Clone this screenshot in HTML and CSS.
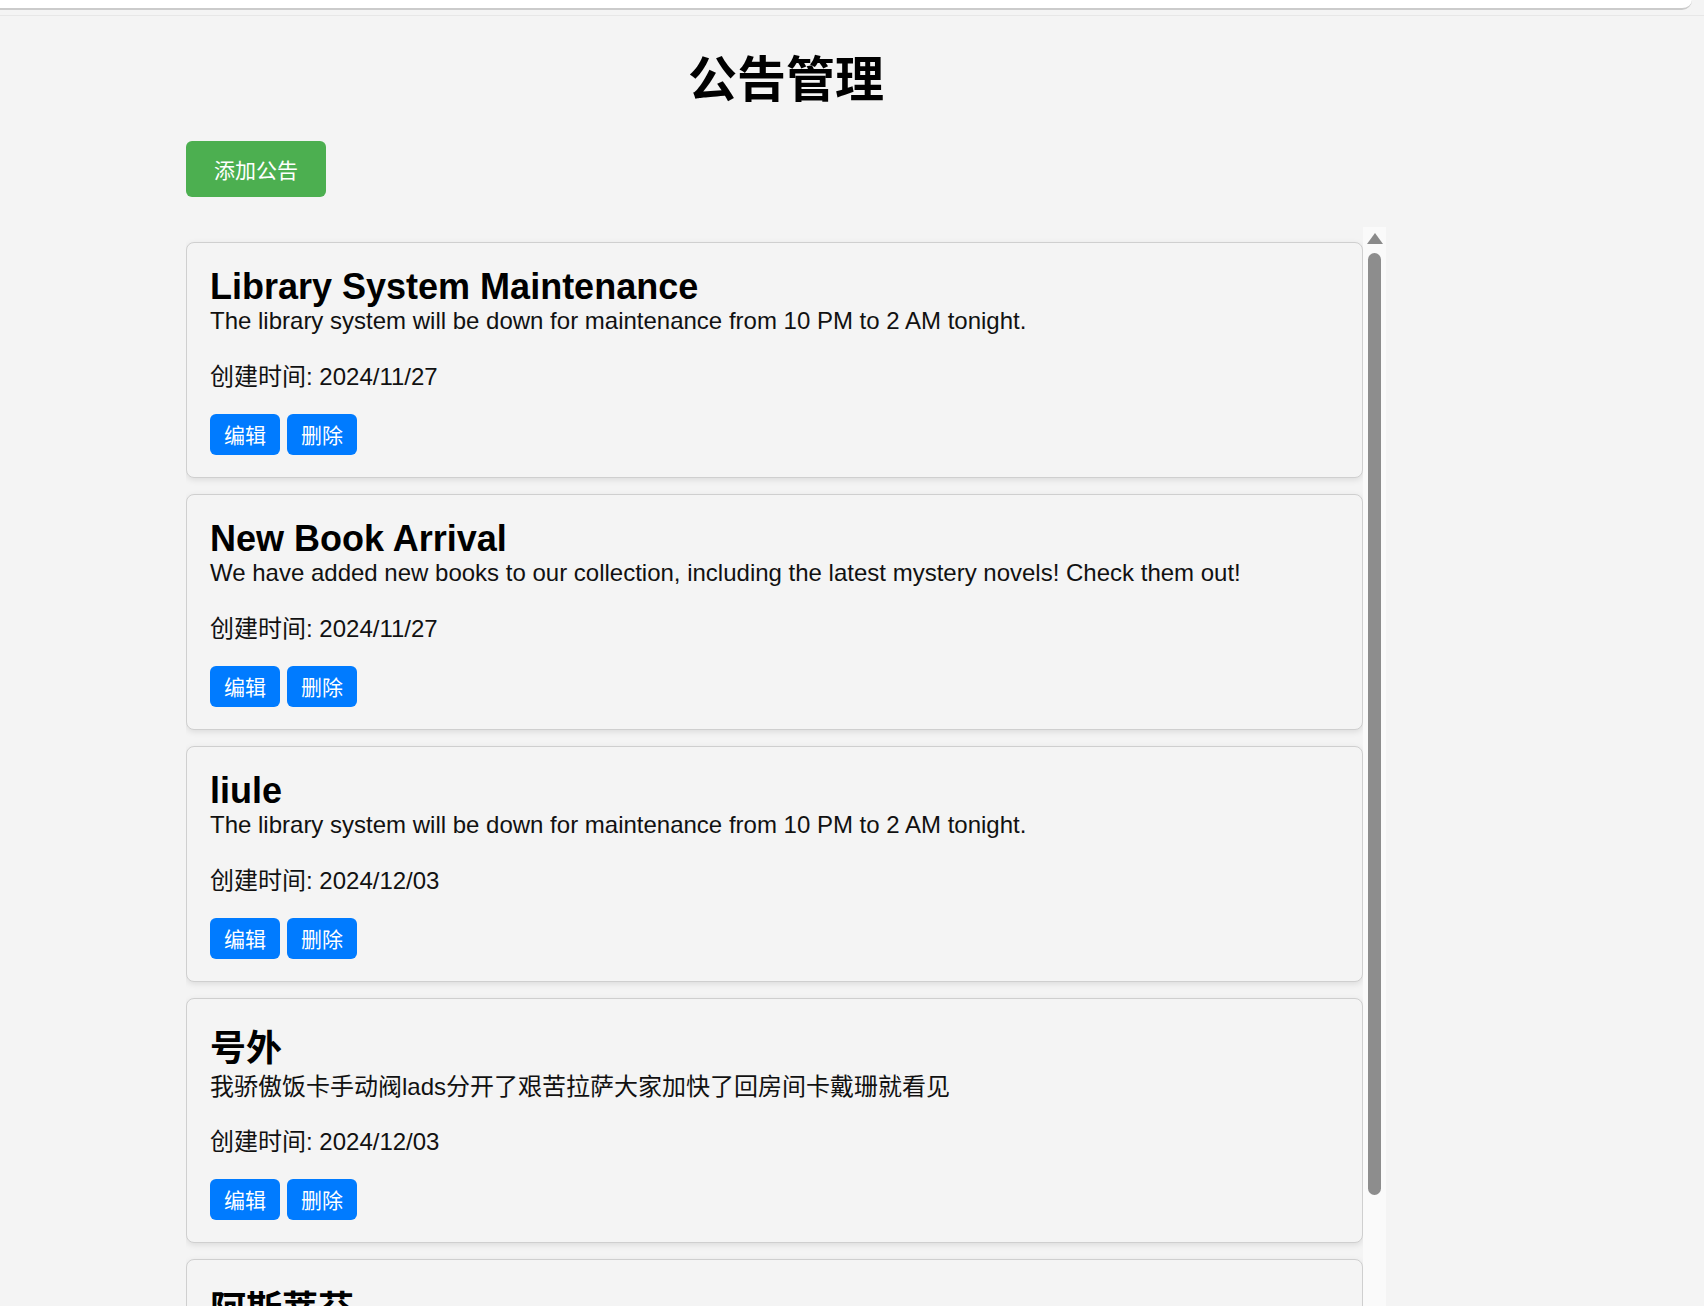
FILE: index.html
```html
<!DOCTYPE html>
<html lang="zh-CN">
<head>
<meta charset="utf-8">
<title>公告管理</title>
<link rel="stylesheet" href="styles.css">
</head>
<body>
<div class="topbar"></div>
<div class="page">
  <div class="container">
    <h1 class="page-title">公告管理</h1>
    <button class="add-btn">添加公告</button>
    <div class="list-wrap">
      <div class="list">
        <div class="card">
          <h2 class="card-title">Library System Maintenance</h2>
          <p class="card-desc">The library system will be down for maintenance from 10 PM to 2 AM tonight.</p>
          <p class="card-date">创建时间: 2024/11/27</p>
          <div class="card-actions">
            <button class="btn">编辑</button><button class="btn">删除</button>
          </div>
        </div>
        <div class="card">
          <h2 class="card-title">New Book Arrival</h2>
          <p class="card-desc">We have added new books to our collection, including the latest mystery novels! Check them out!</p>
          <p class="card-date">创建时间: 2024/11/27</p>
          <div class="card-actions">
            <button class="btn">编辑</button><button class="btn">删除</button>
          </div>
        </div>
        <div class="card">
          <h2 class="card-title">liule</h2>
          <p class="card-desc">The library system will be down for maintenance from 10 PM to 2 AM tonight.</p>
          <p class="card-date">创建时间: 2024/12/03</p>
          <div class="card-actions">
            <button class="btn">编辑</button><button class="btn">删除</button>
          </div>
        </div>
        <div class="card">
          <h2 class="card-title cjk">号外</h2>
          <p class="card-desc cjk">我骄傲饭卡手动阀lads分开了艰苦拉萨大家加快了回房间卡戴珊就看见</p>
          <p class="card-date">创建时间: 2024/12/03</p>
          <div class="card-actions">
            <button class="btn">编辑</button><button class="btn">删除</button>
          </div>
        </div>
        <div class="card">
          <h2 class="card-title cjk">阿斯蒂芬</h2>
          <p class="card-desc cjk">阿斯蒂芬阿斯蒂芬</p>
          <p class="card-date">创建时间: 2024/12/03</p>
          <div class="card-actions">
            <button class="btn">编辑</button><button class="btn">删除</button>
          </div>
        </div>
      </div>
      <div class="scrollbar">
        <div class="scroll-arrow"></div>
        <div class="scroll-thumb"></div>
      </div>
    </div>
  </div>
</div>
</body>
</html>
```
FILE: styles.css
```css
html, body {
  margin: 0;
  padding: 0;
}
body {
  background: #f4f4f4;
  font-family: "Liberation Sans", Arial, "Noto Sans CJK SC", sans-serif;
  color: #000;
  overflow: hidden;
  height: 1306px;
}
.topbar {
  height: 8px;
  background: #fff;
  border-bottom: 2px solid #cbcbcb;
  border-bottom-right-radius: 12px;
  margin-right: 12px;
}
.page {
  margin-top: 5px;
  border-top: 1px solid #e7e7e7;
}
.container {
  width: 1200px;
  margin-left: 186px;
}
.page-title {
  margin: 33px 0 29px;
  font-size: 49px;
  line-height: 63px;
  font-weight: 700;
  text-align: center;
}
.add-btn {
  display: block;
  height: 56px;
  padding: 3px 28px 0;
  border: none;
  border-radius: 6px;
  background: #4caf50;
  color: #fff;
  font-family: "Liberation Sans", Arial, "Noto Sans CJK SC", sans-serif;
  font-size: 21px;
  line-height: 53px;
  cursor: pointer;
}
.list-wrap {
  display: flex;
  margin-top: 30px;
  height: 1120px;
}
.list {
  flex: 1;
  overflow: hidden;
  padding-top: 15px;
}
.card {
  border: 1px solid #cfcfcf;
  border-radius: 8px;
  padding: 23px 22px 22px 23px;
  margin-bottom: 16px;
  background: #f4f4f4;
  box-shadow: 0 2px 6px rgba(0, 0, 0, 0.1);
}
.card-title {
  margin: 0;
  font-size: 36px;
  line-height: 41px;
  font-weight: 700;
}
.card-title.cjk {
  padding-top: 6px;
}
.card-desc {
  margin: 0 0 24px;
  font-size: 24px;
  line-height: 27px;
  color: #111;
}
.card-desc.cjk {
  padding-top: 5px;
  line-height: 25px;
}
.card-date {
  margin: 0 0 24px;
  padding-top: 5px;
  font-size: 24px;
  line-height: 27px;
  color: #111;
}
.card-actions {
  display: flex;
  gap: 7px;
}
.btn {
  height: 41px;
  padding: 3px 14px 0;
  border: none;
  border-radius: 6px;
  background: #007bff;
  color: #fff;
  font-family: "Liberation Sans", Arial, "Noto Sans CJK SC", sans-serif;
  font-size: 21px;
  line-height: 38px;
  cursor: pointer;
}
.scrollbar {
  width: 23px;
  background: #fafafa;
  display: flex;
  flex-direction: column;
  align-items: center;
}
.scroll-arrow {
  width: 0;
  height: 0;
  margin-top: 6px;
  border-left: 8px solid transparent;
  border-right: 8px solid transparent;
  border-bottom: 11px solid #8a8a8a;
}
.scroll-thumb {
  margin-top: 9px;
  width: 13px;
  height: 942px;
  border-radius: 7px;
  background: #8d8d8d;
}
```
